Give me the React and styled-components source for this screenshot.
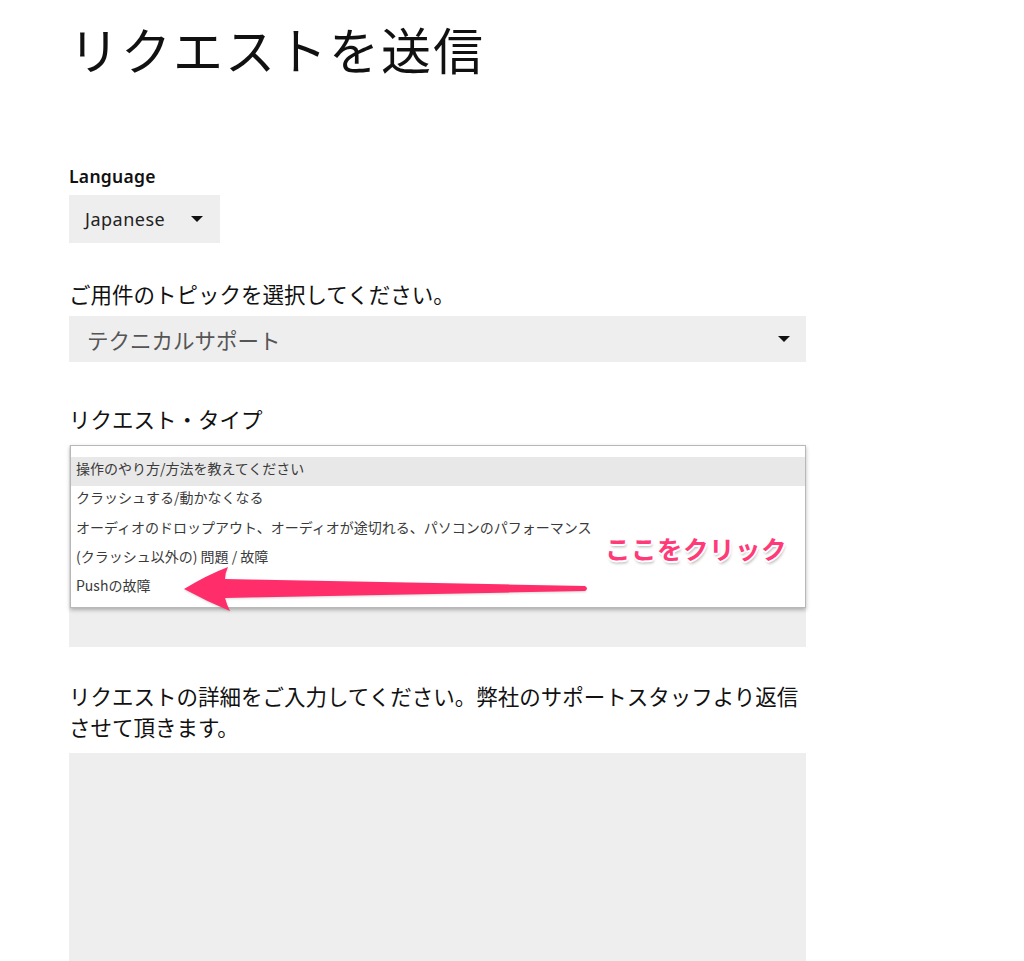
import styled, { createGlobalStyle } from 'styled-components';

const GlobalStyle = createGlobalStyle`
    body {
        margin: 0;
        background: #ffffff;
        font-family: 'Noto Sans CJK JP', 'Noto Sans', sans-serif;
        color: #111111;
    }
`

const requestTypes = [
    '操作のやり方/方法を教えてください',
    'クラッシュする/動かなくなる',
    'オーディオのドロップアウト、オーディオが途切れる、パソコンのパフォーマンス',
    '(クラッシュ以外の) 問題 / 故障',
    'Pushの故障',
];

function Caret() {
    return <CaretMark />;
}

export default function App() {
    return (
        <>
            <GlobalStyle />
            <Page>
                <Title>リクエストを送信</Title>

                <LangLabel>Language</LangLabel>
                <LangSelect>
                    <span>Japanese</span>
                    <Caret />
                </LangSelect>

                <Label $top={35}>ご用件のトピックを選択してください。</Label>
                <TopicSelect>
                    <span>テクニカルサポート</span>
                    <Caret />
                </TopicSelect>

                <Label $top={41}>リクエスト・タイプ</Label>
                <TypeField>
                    <ListBox>
                        {requestTypes.map((t, i) => (
                            <Option key={t} $active={i === 0}>{t}</Option>
                        ))}
                    </ListBox>
                    <ArrowSvg viewBox="0 0 737 202" width="737" height="202">
                        <path
                            d="M115 144 Q138 130 159 122 Q156 128 156 134 L516 141 Q520 143.5 516 146 L156 153 Q158 160 161 166 Q137 156 115 144 Z"
                            fill="#ff2e6b"
                        />
                    </ArrowSvg>
                    <Callout>ここをクリック</Callout>
                </TypeField>

                <Label $top={33}>
                    リクエストの詳細をご入力してください。弊社のサポートスタッフより返信させて頂きます。
                </Label>
                <TextArea />
            </Page>
        </>
    );
}

const Page = styled.div`
    width: 737px;
    padding: 23px 0 0 69px;
    box-sizing: content-box;
`

const Title = styled.h1`
    margin: 0;
    font-size: 50px;
    line-height: 50px;
    font-weight: 400;
    letter-spacing: 2px;
    color: #111111;
`

const LangLabel = styled.div`
    margin-top: 93px;
    font-family: 'Noto Sans', 'Lato', sans-serif;
    font-size: 17.5px;
    line-height: 20px;
    font-weight: 600;
    letter-spacing: 0.3px;
    color: #111111;
`

const SelectBox = styled.div`
    display: flex;
    align-items: center;
    justify-content: space-between;
    background: #eeeeee;
    box-sizing: border-box;
`

const LangSelect = styled(SelectBox)`
    margin-top: 9px;
    width: 151px;
    height: 48px;
    padding: 0 17px 0 16px;
    font-family: 'Noto Sans', 'Lato', sans-serif;
    font-size: 18px;
    letter-spacing: 0.5px;
    color: #222222;
`

const TopicSelect = styled(SelectBox)`
    margin-top: 7px;
    width: 737px;
    height: 46px;
    padding: 0 16px 0 18px;
    font-size: 21.5px;
    color: #555555;
`

const CaretMark = styled.i`
    display: block;
    width: 0;
    height: 0;
    border-left: 6px solid transparent;
    border-right: 6px solid transparent;
    border-top: 6px solid #111111;
`

const Label = styled.div`
    margin-top: ${p => p.$top}px;
    font-size: 21.5px;
    line-height: 31px;
    color: #111111;
`

const TypeField = styled.div`
    position: relative;
    margin-top: 11px;
    width: 737px;
    height: 202px;
    background: #eeeeee;
`

const ListBox = styled.div`
    position: absolute;
    left: 1px;
    top: 0;
    width: 736px;
    box-sizing: border-box;
    padding: 11px 0 4px;
    background: #ffffff;
    border: 1px solid #b8b8b8;
    box-shadow: 0 2px 4px rgba(0, 0, 0, 0.28);
`

const Option = styled.div`
    height: 29.3px;
    line-height: 23px;
    padding-left: 5px;
    font-size: 14px;
    color: #3a3a3a;
    background: ${p => (p.$active ? '#e8e8e8' : 'transparent')};
    white-space: nowrap;
`

const ArrowSvg = styled.svg`
    position: absolute;
    left: 0;
    top: 0;
    pointer-events: none;
    filter: drop-shadow(0 1px 1px rgba(0, 0, 0, 0.15));
`

const Callout = styled.div`
    position: absolute;
    left: 536px;
    top: 90px;
    font-size: 25.5px;
    line-height: 26px;
    font-weight: 700;
    letter-spacing: 0.5px;
    color: #ff3a78;
    white-space: nowrap;
    text-shadow:
        1px 1px 0 #fff, -1px 1px 0 #fff, 1px -1px 0 #fff, -1px -1px 0 #fff,
        2px 0 0 #fff, -2px 0 0 #fff, 0 2px 0 #fff, 0 -2px 0 #fff,
        1px 3px 3px rgba(0, 0, 0, 0.3);
`

const TextArea = styled.div`
    margin-top: 11px;
    width: 737px;
    height: 208px;
    background: #eeeeee;
`
